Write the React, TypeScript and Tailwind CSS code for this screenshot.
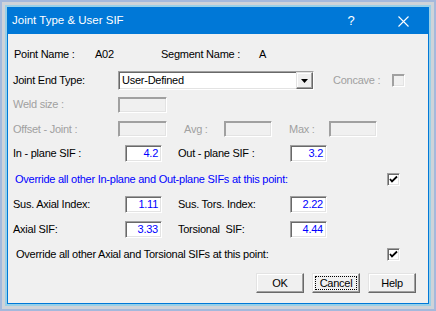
import React from "react";

const font = { fontFamily: '"Liberation Sans", Arial, sans-serif' };

const sunken =
  "border border-t-[#a0a0a0] border-l-[#a0a0a0] border-b-white border-r-white shadow-[inset_1px_1px_0_#696969,inset_-1px_-1px_0_#e3e3e3]";
const sunkenDisabled =
  "border border-t-[#a0a0a0] border-l-[#a0a0a0] border-b-white border-r-white shadow-[inset_1px_1px_0_#a0a0a0,inset_-1px_-1px_0_#e3e3e3]";
const raised =
  "border border-t-[#e3e3e3] border-l-[#e3e3e3] border-b-[#696969] border-r-[#696969] shadow-[inset_-1px_-1px_0_#a0a0a0,inset_1px_1px_0_#ffffff]";

function ValueBox({ v }: { v: string }) {
  return (
    <div
      className={`h-[17px] w-[37px] shrink-0 bg-white ${sunken} flex items-center justify-end pr-[3px] text-[#0000ff]`}
    >
      {v}
    </div>
  );
}

function DisabledBox({ w = 49 }: { w?: number }) {
  return (
    <div
      className={`h-[16px] shrink-0 bg-[#f0f0f0] ${sunkenDisabled}`}
      style={{ width: w }}
    />
  );
}

function CheckBox({ checked }: { checked?: boolean }) {
  return (
    <div
      className={`h-[13px] w-[13px] shrink-0 ${checked ? "bg-white" : "bg-[#f0f0f0]"} ${checked ? sunken : sunkenDisabled} flex items-center justify-center`}
    >
      {checked && (
        <svg width="9" height="9" viewBox="0 0 9 9">
          <path d="M1 4 L3 6.5 L8 1.5" stroke="#000" strokeWidth="1.8" fill="none" />
        </svg>
      )}
    </div>
  );
}

function Button({ label, focus }: { label: string; focus?: boolean }) {
  return (
    <div
      className={`h-[20px] w-[48px] shrink-0 bg-[#f0f0f0] ${raised} flex items-center justify-center p-[2px]`}
    >
      <div
        className={`w-full h-full flex items-center justify-center ${focus ? "border border-dotted border-black" : ""}`}
      >
        {label}
      </div>
    </div>
  );
}

export default function App() {
  return (
    <div
      className="w-[436px] h-[311px] bg-[#a4b9dc] p-[2px] flex"
      style={font}
    >
      <div className="flex-1 bg-[#cfd3d8] p-[3px] flex">
        <div className="flex-1 bg-[#98d0e8] p-[2px] flex">
          <div className="flex-1 border border-[#0078d7] flex flex-col">
            {/* Title bar */}
            <div className="h-[26px] bg-[#0078d7] flex items-center text-white shrink-0">
              <div className="pl-[4px] text-[11.5px] flex-1">
                Joint Type &amp; User SIF
              </div>
              <div className="w-[20px] text-[13px] mr-[37px] text-center">?</div>
              <svg width="11" height="11" viewBox="0 0 11 11" className="mr-[19px]">
                <path d="M0.5 0.5 L10.5 10.5 M10.5 0.5 L0.5 10.5" stroke="#fff" strokeWidth="1.1" />
              </svg>
            </div>
            {/* Content */}
            <div className="flex-1 bg-[#f0f0f0] text-[11px] tracking-[-0.25px] text-black flex flex-col">
              {/* R1 */}
              <div className="mt-[12px] h-[16px] flex items-center">
                <div className="ml-[6px] w-[81px]">Point Name :</div>
                <div className="w-[66px]">A02</div>
                <div className="w-[98px]">Segment Name :</div>
                <div>A</div>
              </div>
              {/* R2 */}
              <div className="mt-[9px] h-[19px] flex items-center">
                <div className="ml-[5px] w-[105px]">Joint End Type:</div>
                <div className={`h-[19px] w-[196px] bg-white ${sunken} flex items-center`}>
                  <div className="flex-1 pl-[3px]">User-Defined</div>
                  <div
                    className={`h-[17px] w-[17px] bg-[#f0f0f0] ${raised} flex items-center justify-center`}
                  >
                    <svg width="7" height="4" viewBox="0 0 7 4">
                      <path d="M0 0 L7 0 L3.5 4 Z" fill="#000" />
                    </svg>
                  </div>
                </div>
                <div className="ml-[19px] w-[59px] text-[#a0a0a0]">Concave :</div>
                <CheckBox />
              </div>
              {/* R3 */}
              <div className="mt-[6px] h-[17px] flex items-center">
                <div className="ml-[5px] w-[105px] text-[#a0a0a0]">Weld size :</div>
                <DisabledBox />
              </div>
              {/* R4 */}
              <div className="mt-[8px] h-[16px] flex items-center text-[#a0a0a0]">
                <div className="ml-[5px] w-[105px]">Offset - Joint :</div>
                <DisabledBox />
                <div className="ml-[17px] w-[40px]">Avg :</div>
                <DisabledBox w={48} />
                <div className="ml-[17px] w-[40px]">Max :</div>
                <DisabledBox w={48} />
              </div>
              {/* R5 */}
              <div className="mt-[8px] h-[17px] flex items-center">
                <div className="ml-[5px] w-[112px]">In - plane SIF :</div>
                <ValueBox v="4.2" />
                <div className="ml-[16px] w-[112px]">Out - plane SIF :</div>
                <ValueBox v="3.2" />
              </div>
              {/* R6 */}
              <div className="mt-[10px] h-[14px] flex items-center">
                <div className="ml-[7px] w-[372px] text-[#0000ff]">
                  Override all other In-plane and Out-plane SIFs at this point:
                </div>
                <CheckBox checked />
              </div>
              {/* R7 */}
              <div className="mt-[10px] h-[17px] flex items-center">
                <div className="ml-[5px] w-[112px]">Sus. Axial Index:</div>
                <ValueBox v="1.11" />
                <div className="ml-[16px] w-[112px]">Sus. Tors. Index:</div>
                <ValueBox v="2.22" />
              </div>
              {/* R8 */}
              <div className="mt-[8px] h-[16px] flex items-center">
                <div className="ml-[5px] w-[112px]">Axial SIF:</div>
                <ValueBox v="3.33" />
                <div className="ml-[16px] w-[112px] whitespace-pre">Torsional  SIF:</div>
                <ValueBox v="4.44" />
              </div>
              {/* R9 */}
              <div className="mt-[10px] h-[14px] flex items-center">
                <div className="ml-[8px] w-[371px]">
                  Override all other Axial and Torsional SIFs at this point:
                </div>
                <CheckBox checked />
              </div>
              {/* R10 */}
              <div className="mt-[12px] flex items-center justify-end gap-[8px] pr-[12px]">
                <Button label="OK" />
                <Button label="Cancel" focus />
                <Button label="Help" />
              </div>
            </div>
          </div>
        </div>
      </div>
    </div>
  );
}
